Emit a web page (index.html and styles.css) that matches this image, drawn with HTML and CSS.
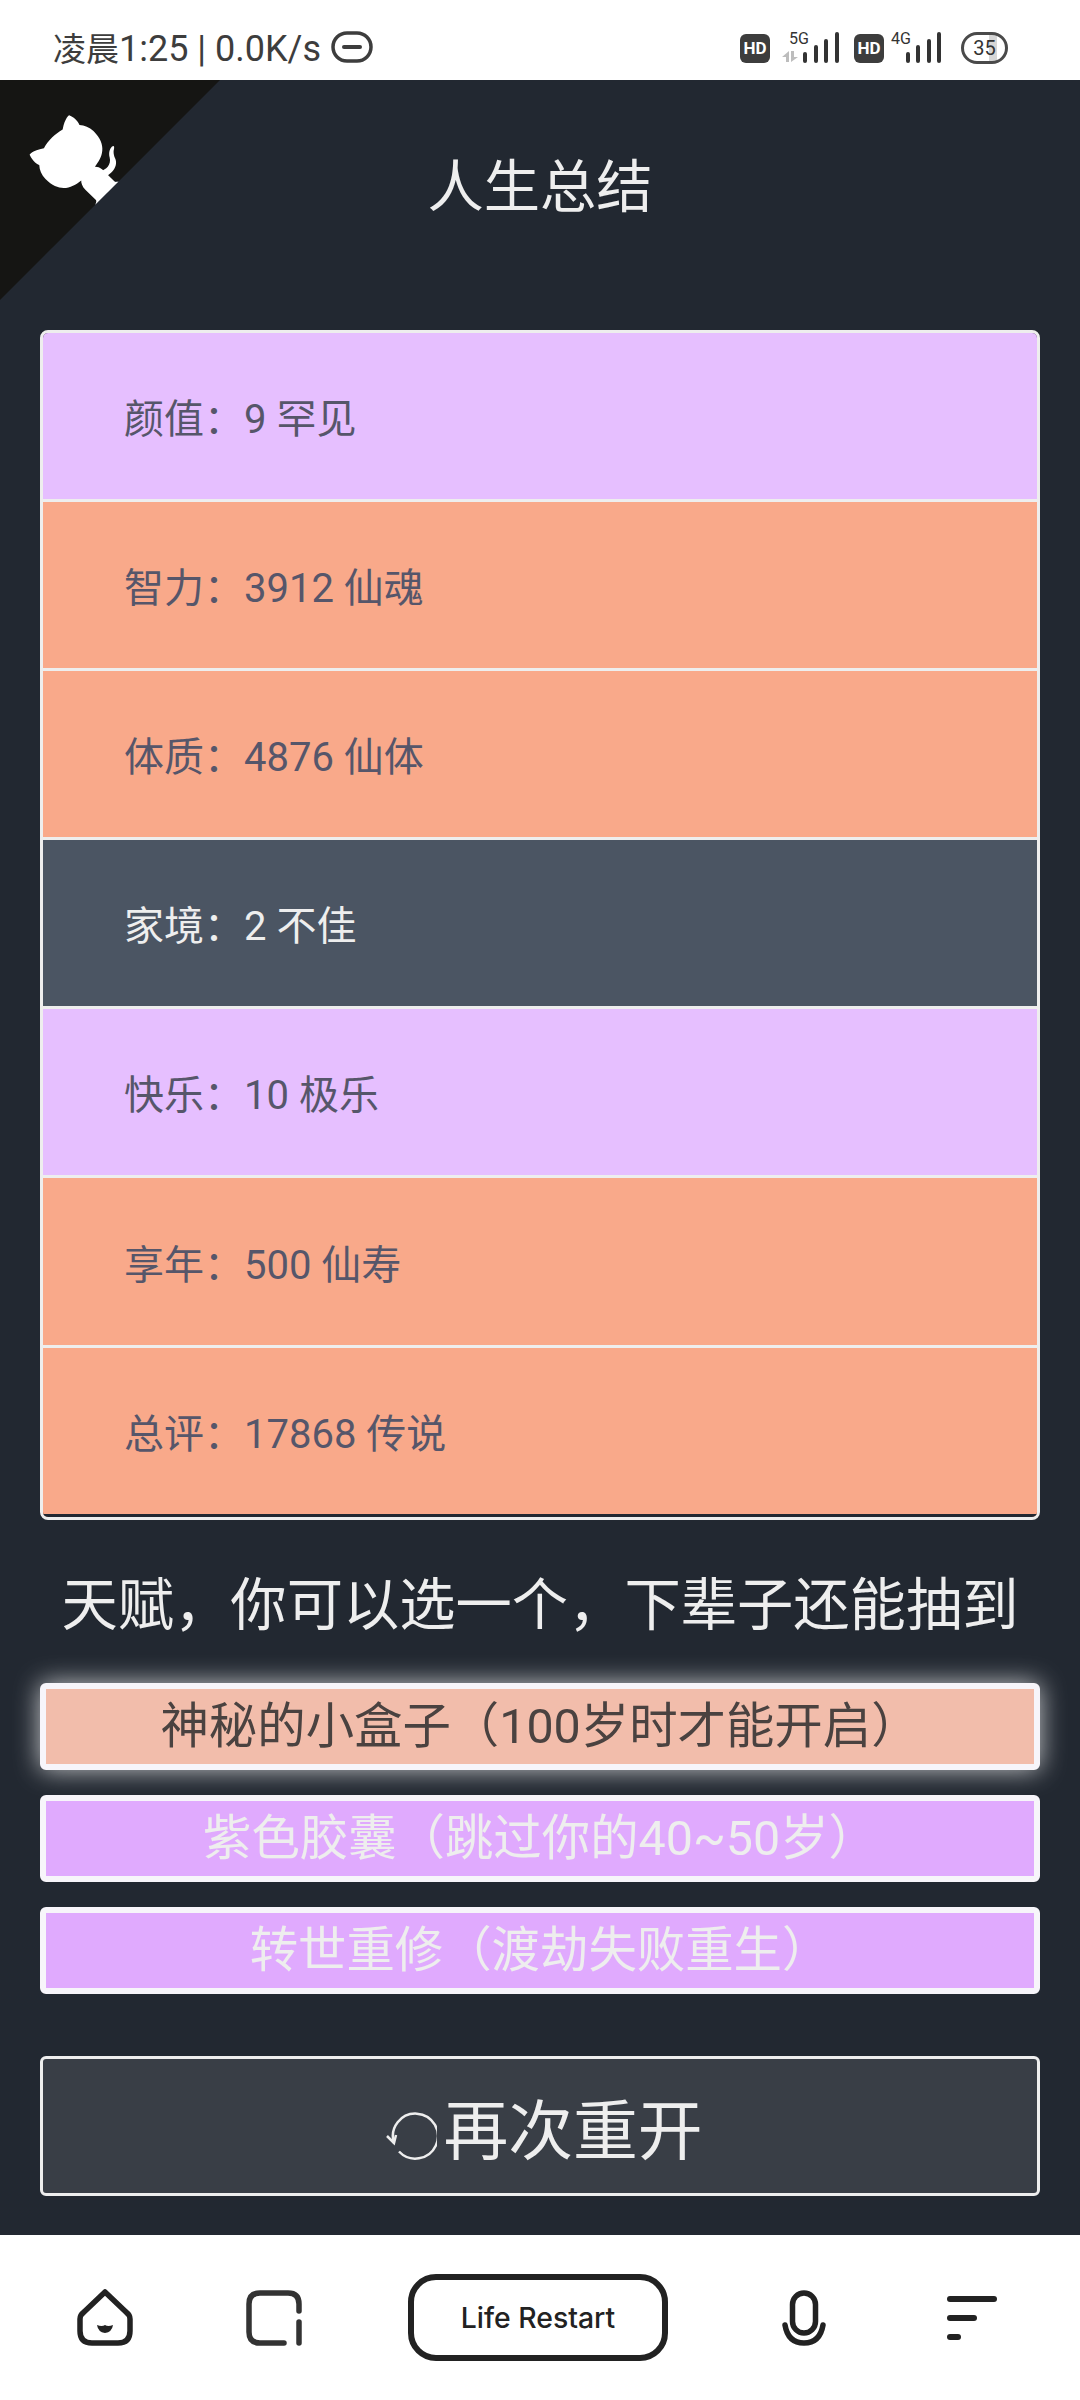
FILE: index.html

```html
<!DOCTYPE html>
<html lang="zh-CN">
<head>
<meta charset="UTF-8" />
<title>Life Restart</title>
<link rel="stylesheet" href="styles.css">
</head>
<body>

<div class="status-bar">
  <div class="status-left">
    <span class="status-text">凌晨<span class="status-num">1:25 | 0.0K/s</span></span>
    <svg class="dnd-icon" width="42" height="32" viewBox="0 0 42 32">
      <rect x="2" y="2" width="38" height="28" rx="14" fill="none" stroke="#3d3d3d" stroke-width="3.5"/>
      <rect x="11" y="14" width="20" height="4" rx="2" fill="#3d3d3d"/>
    </svg>
  </div>
  <div class="status-right">
    <span class="hd-badge">HD</span>
    <div class="signal signal-5g">
      <span class="net-label">5G</span>
      <svg width="57" height="32" viewBox="0 0 57 32">
        <path d="M0 25l7-6v11H4v-5zM9 19h3v6h4l-7 5z" fill="#bdbdbd"/>
        <rect x="21" y="20" width="4" height="11" rx="2" fill="#333"/>
        <rect x="32" y="13" width="4" height="18" rx="2" fill="#333"/>
        <rect x="42" y="7" width="4" height="24" rx="2" fill="#333"/>
        <rect x="53" y="0" width="4" height="31" rx="2" fill="#333"/>
      </svg>
    </div>
    <span class="hd-badge">HD</span>
    <div class="signal signal-4g">
      <span class="net-label">4G</span>
      <svg width="35" height="32" viewBox="0 0 35 32">
        <rect x="0" y="20" width="4" height="11" rx="2" fill="#333"/>
        <rect x="10" y="13" width="4" height="18" rx="2" fill="#333"/>
        <rect x="21" y="7" width="4" height="24" rx="2" fill="#333"/>
        <rect x="31" y="0" width="4" height="31" rx="2" fill="#333"/>
      </svg>
    </div>
    <span class="battery">35</span>
  </div>
</div>

<svg class="corner" width="220" height="220" viewBox="0 0 250 250">
  <g transform="translate(250,0) scale(-1,1)">
    <path d="M0,0 L115,115 L130,115 L142,142 L250,250 L250,0 Z" fill="#151513"/>
    <path d="M128.3,109.0 C113.8,99.7 119.0,89.6 119.0,89.6 C122.0,82.7 120.5,78.6 120.5,78.6 C119.2,72.0 123.4,76.3 123.4,76.3 C127.3,80.9 125.5,87.3 125.5,87.3 C122.9,97.6 130.6,101.9 134.4,103.2" fill="#fff"/>
    <path d="M115.0,115.0 C114.9,115.1 118.7,116.5 119.8,115.4 L133.7,101.6 C136.9,99.2 139.9,98.4 142.2,98.6 C133.8,88.0 127.5,74.4 143.8,58.0 C148.5,53.4 154.0,51.2 159.7,51.0 C160.3,49.4 163.2,43.6 171.4,40.1 C171.4,40.1 176.1,42.5 178.8,56.2 C183.1,58.6 187.2,61.8 190.9,65.4 C194.5,69.0 197.7,73.2 200.1,77.6 C213.8,80.2 216.3,84.9 216.3,84.9 C212.7,93.1 206.9,96.0 205.4,96.6 C205.1,102.4 203.0,107.8 198.3,112.5 C181.9,128.9 168.3,122.5 157.7,114.1 C157.9,116.9 156.7,120.9 152.7,124.9 L141.0,136.5 C139.8,137.7 141.6,141.9 141.8,141.8 Z" fill="#fff"/>
  </g>
</svg>

<main class="app">
  <h1 class="title">人生总结</h1>

  <ul class="summary">
    <li class="row grade-2">颜值：9 罕见</li>
    <li class="row grade-3">智力：3912 仙魂</li>
    <li class="row grade-3">体质：4876 仙体</li>
    <li class="row grade-0">家境：2 不佳</li>
    <li class="row grade-2">快乐：10 极乐</li>
    <li class="row grade-3">享年：500 仙寿</li>
    <li class="row grade-3">总评：17868 传说</li>
  </ul>

  <h2 class="subtitle">天赋，你可以选一个，下辈子还能抽到</h2>

  <div class="talents">
    <button class="talent talent-on">神秘的小盒子（100岁时才能开启）</button>
    <button class="talent">紫色胶囊（跳过你的40~50岁）</button>
    <button class="talent">转世重修（渡劫失败重生）</button>
  </div>

  <button class="restart">
    <svg class="restart-icon" width="52" height="52" viewBox="-3 0 52 52">
      <path d="M6 35A22.5 22.5 0 1 1 11 43.5" fill="none" stroke="#eee" stroke-width="2.5"/>
      <path d="M-1 28L6 35L8 27" fill="none" stroke="#eee" stroke-width="2.5"/>
    </svg>
    <span>再次重开</span>
  </button>
</main>

<nav class="nav-bar">
  <svg class="nav-home" width="56" height="58" viewBox="0 0 56 58">
    <path d="M28 3L49 23Q53 26 53 30V42Q53 54 41 54H15Q3 54 3 42V30Q3 26 7 23Z" fill="none" stroke="#222" stroke-width="5.5" stroke-linejoin="round"/>
    <path d="M20 36Q25 38 28 36Q31 38 36 36Q35 43 28 44Q21 43 20 36Z" fill="#222"/>
  </svg>
  <svg class="nav-recent" width="56" height="56" viewBox="0 0 56 56">
    <path d="M38 53H14Q3 53 3 42V14Q3 3 14 3H42Q53 3 53 14V21" fill="none" stroke="#333" stroke-width="5.5" stroke-linecap="round"/>
    <path d="M53 32V53" fill="none" stroke="#333" stroke-width="5.5" stroke-linecap="round"/>
  </svg>
  <div class="nav-pill">Life Restart</div>
  <svg class="nav-mic" width="44" height="56" viewBox="0 0 44 56">
    <rect x="10.5" y="3" width="23" height="40" rx="11.5" fill="none" stroke="#222" stroke-width="5.5"/>
    <path d="M3 35Q6 53 22 53Q38 53 41 35" fill="none" stroke="#222" stroke-width="5.5" stroke-linecap="round"/>
  </svg>
  <div class="nav-menu">
    <span class="menu-bar menu-long"></span>
    <span class="menu-bar menu-mid"></span>
    <span class="menu-bar menu-short"></span>
  </div>
</nav>

</body>
</html>
```

FILE: styles.css

```css
* {
  box-sizing: border-box;
}
html, body {
  margin: 0;
  padding: 0;
}
body {
  width: 1080px;
  height: 2400px;
  overflow: hidden;
  position: relative;
  background: #fff;
  font-family: Roboto, "Noto Sans CJK SC", sans-serif;
}

/* status bar */
.status-bar {
  height: 80px;
  padding: 16px 72px 0 53px;
  display: flex;
  justify-content: space-between;
  align-items: center;
  background: #fff;
  color: #3d3d3d;
}
.status-left {
  display: flex;
  align-items: center;
  gap: 10px;
}
.status-text {
  font-size: 33px;
  line-height: 36px;
  margin-top: 3px;
}
.status-num {
  font-size: 36px;
}
.dnd-icon {
  margin-top: -3px;
}
.status-right {
  display: flex;
  align-items: center;
  height: 32px;
}
.hd-badge {
  width: 30px;
  height: 29px;
  border-radius: 6px;
  background: #3d3d3d;
  color: #fff;
  font-size: 17px;
  font-weight: 700;
  line-height: 29px;
  text-align: center;
}
.signal {
  position: relative;
  display: flex;
  align-items: flex-end;
  height: 32px;
}
.signal-5g {
  margin-left: 12px;
  margin-right: 15px;
}
.signal-4g {
  margin-left: 22px;
  margin-right: 20px;
}
.net-label {
  position: absolute;
  top: -1px;
  font-size: 16px;
  line-height: 1;
  color: #333;
}
.signal-5g .net-label {
  left: 7px;
}
.signal-4g .net-label {
  left: -15px;
}
.battery {
  width: 47px;
  height: 32px;
  border: 3px solid #4a4a4a;
  border-radius: 16px;
  font-size: 20px;
  line-height: 26px;
  text-align: center;
  color: #333;
  background: linear-gradient(90deg, #fff 60%, #d6d6d6 60%, #d6d6d6 80%, #fff 80%);
}

.corner {
  position: absolute;
  top: 80px;
  left: 0;
}

/* main panel */
.app {
  height: 2155px;
  padding: 0 40px;
  background: #222831;
  color: #eee;
  display: flex;
  flex-direction: column;
}
.title {
  margin: 76px 0 110px;
  font-size: 56.3px;
  font-weight: 400;
  line-height: 64px;
  text-align: center;
}
.summary {
  list-style: none;
  margin: 0;
  padding: 0;
  border: 3px solid #eee;
  border-radius: 8px;
  overflow: hidden;
  background: #222831;
}
.row {
  height: 169.1px;
  padding-left: 81px;
  display: flex;
  align-items: center;
  font-size: 40px;
  color: #56566a;
  border-bottom: 3px solid #eee;
}
.row:last-child {
  border-bottom-color: #222831;
}
.grade-0 {
  background: #4b5563;
  color: #eee;
}
.grade-2 {
  background: #e6bfff;
}
.grade-3 {
  background: #f9a98a;
}
.subtitle {
  margin: 54px 0 45px;
  font-size: 56.3px;
  font-weight: 400;
  line-height: 64px;
  text-align: center;
  white-space: nowrap;
}
.talents {
  display: flex;
  flex-direction: column;
  gap: 25px;
}
.talent {
  height: 87px;
  padding: 2px 0 0;
  border: 6px solid #f7f5fa;
  border-radius: 6px;
  background: #e0aafe;
  color: #eee;
  font-family: inherit;
  font-size: 48.4px;
  line-height: 1;
}
.talent-on {
  background: #f2bdab;
  color: #4a4240;
  box-shadow: 0 0 26px rgba(255, 255, 255, 0.75);
}
.restart {
  height: 140px;
  margin-top: 62px;
  padding: 0 0 0 8px;
  border: 3px solid #eee;
  border-radius: 6px;
  background: #393e46;
  color: #eee;
  font-family: inherit;
  font-size: 64.8px;
  display: flex;
  justify-content: center;
  align-items: center;
  gap: 6px;
}
.restart-icon {
  margin-top: 16px;
}

/* bottom nav */
.nav-bar {
  position: relative;
  height: 165px;
  background: #fff;
  display: flex;
  align-items: center;
  padding-left: 77px;
}
.nav-recent {
  margin-left: 113px;
}
.nav-pill {
  width: 260px;
  height: 87px;
  margin-left: 106px;
  border: 6px solid #222;
  border-radius: 28px;
  display: flex;
  justify-content: center;
  align-items: center;
  font-family: Inter, sans-serif;
  font-size: 28.4px;
  font-weight: 500;
  color: #222;
}
.nav-mic {
  margin-left: 114px;
}
.nav-menu {
  margin-left: 121px;
  display: flex;
  flex-direction: column;
  gap: 13px;
}
.menu-bar {
  display: block;
  height: 6px;
  border-radius: 3px;
  background: #222;
}
.menu-long {
  width: 50px;
}
.menu-mid {
  width: 30px;
}
.menu-short {
  width: 14px;
}
```
